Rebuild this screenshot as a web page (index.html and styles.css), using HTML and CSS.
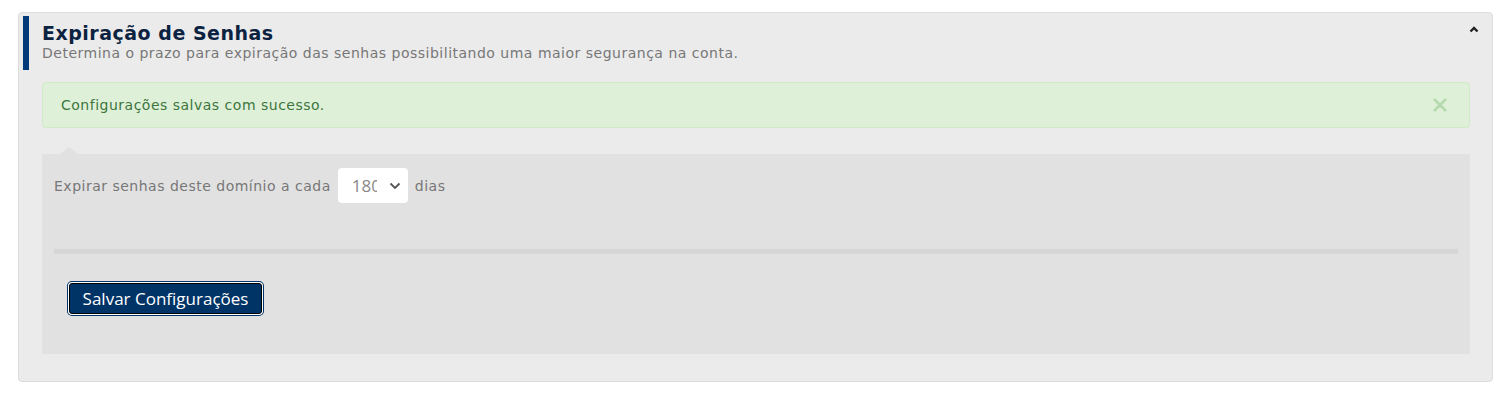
FILE: index.html
```html
<!DOCTYPE html>
<html>
<head>
    <meta charset="utf-8">
    <meta name="viewport" content="width=device-width, initial-scale=1.0">
    <link rel="stylesheet" href="styles.css">
</head>
<body>
    <div class="panel">
        <div class="panel-header">
            <div class="header-text">
                <div class="title">Expiração de Senhas</div>
                <div class="subtitle">Determina o prazo para expiração das senhas possibilitando uma maior segurança na conta.</div>
            </div>
            <button class="collapse-btn" title="Recolher">
                <svg width="10" height="7" viewBox="0 0 10 7">
                    <path d="M1.5 5.5 L5 2 L8.5 5.5" fill="none" stroke="#222" stroke-width="2.4"/>
                </svg>
            </button>
        </div>

        <div class="panel-body">
            <div class="alert">
                <span>Configurações salvas com sucesso.</span>
                <button class="alert-close" title="Fechar">
                    <svg width="16" height="16" viewBox="0 0 16 16">
                        <path d="M2 2 L14 14 M14 2 L2 14" stroke="#b3d9ad" stroke-width="2.6"/>
                    </svg>
                </button>
            </div>

            <div class="settings">
                <div class="field-row">
                    <label for="dias">Expirar senhas deste domínio a cada</label>
                    <span class="select-box">
                        <select id="dias">
                            <option>180</option>
                            <option>90</option>
                            <option>60</option>
                            <option>30</option>
                        </select>
                        <svg width="12" height="8" viewBox="0 0 12 8">
                            <path d="M1.5 1.5 L6 6 L10.5 1.5" fill="none" stroke="#555" stroke-width="1.8"/>
                        </svg>
                    </span>
                    <span>dias</span>
                </div>

                <div class="divider"></div>

                <button class="save-btn">Salvar Configurações</button>
            </div>
        </div>
    </div>
</body>
</html>
```

FILE: styles.css
```css
* {
    box-sizing: border-box;
}

body {
    margin: 0;
    padding: 12px 18px;
    font-family: "DejaVu Sans", Verdana, sans-serif;
    font-size: 14px;
    letter-spacing: 0.5px;
    color: #333;
    background: #ffffff;
}

.panel {
    width: 1475px;
    height: 370px;
    background: #ebebeb;
    border: 1px solid #dcdcdc;
    border-radius: 4px;
}

.panel-header {
    display: flex;
    align-items: flex-start;
    justify-content: space-between;
    margin: 3px 0 0 4px;
    height: 54px;
    border-left: 6px solid #003a78;
    padding-left: 13px;
}

.title {
    font-size: 19px;
    font-weight: bold;
    letter-spacing: 0.5px;
    color: #0b2340;
    line-height: 22px;
    padding-top: 6px;
}

.subtitle {
    color: #777;
    line-height: 18px;
    margin-top: 0;
}

.collapse-btn {
    background: none;
    border: none;
    padding: 0;
    margin: 10px 13px 0 0;
    cursor: pointer;
    line-height: 0;
}

.panel-body {
    padding: 12px 22px 0 23px;
}

.alert {
    display: flex;
    align-items: center;
    justify-content: space-between;
    height: 46px;
    padding: 0 21px 0 18px;
    background: #dff0d8;
    border: 1px solid #d0e9c6;
    border-radius: 4px;
    color: #3c763d;
}

.alert-close {
    background: none;
    border: none;
    padding: 0;
    cursor: pointer;
    line-height: 0;
}

.settings {
    position: relative;
    margin-top: 26px;
    height: 200px;
    background: #e1e1e1;
    padding: 14px 12px 0 12px;
}

.settings::before {
    content: '';
    position: absolute;
    top: -7px;
    left: 18px;
    border-left: 9px solid transparent;
    border-right: 9px solid transparent;
    border-bottom: 7px solid #e1e1e1;
}

.field-row {
    display: flex;
    align-items: center;
    gap: 7px;
    color: #777;
}

.select-box {
    display: flex;
    align-items: center;
    width: 70px;
    height: 35px;
    background: #ffffff;
    border-radius: 4px;
    padding-left: 14px;
}

.select-box select {
    appearance: none;
    -webkit-appearance: none;
    width: 25px;
    border: none;
    background: transparent;
    padding: 0;
    font-family: "Open Sans", sans-serif;
    font-size: 17px;
    letter-spacing: 0;
    color: #888;
    outline: none;
}

.select-box svg {
    margin-left: 12px;
}

.divider {
    height: 5px;
    background: #d6d6d6;
    margin-top: 46px;
}

.save-btn {
    display: block;
    margin: 29px 0 0 15px;
    width: 193px;
    height: 31px;
    background: #003366;
    border: 1px solid #000;
    border-radius: 3px;
    box-shadow: 0 0 0 1px #fff, 0 0 0 2px #003366;
    color: #fff;
    font-family: "Open Sans", sans-serif;
    font-size: 17px;
    letter-spacing: 0;
    padding: 0;
    cursor: pointer;
}
```
